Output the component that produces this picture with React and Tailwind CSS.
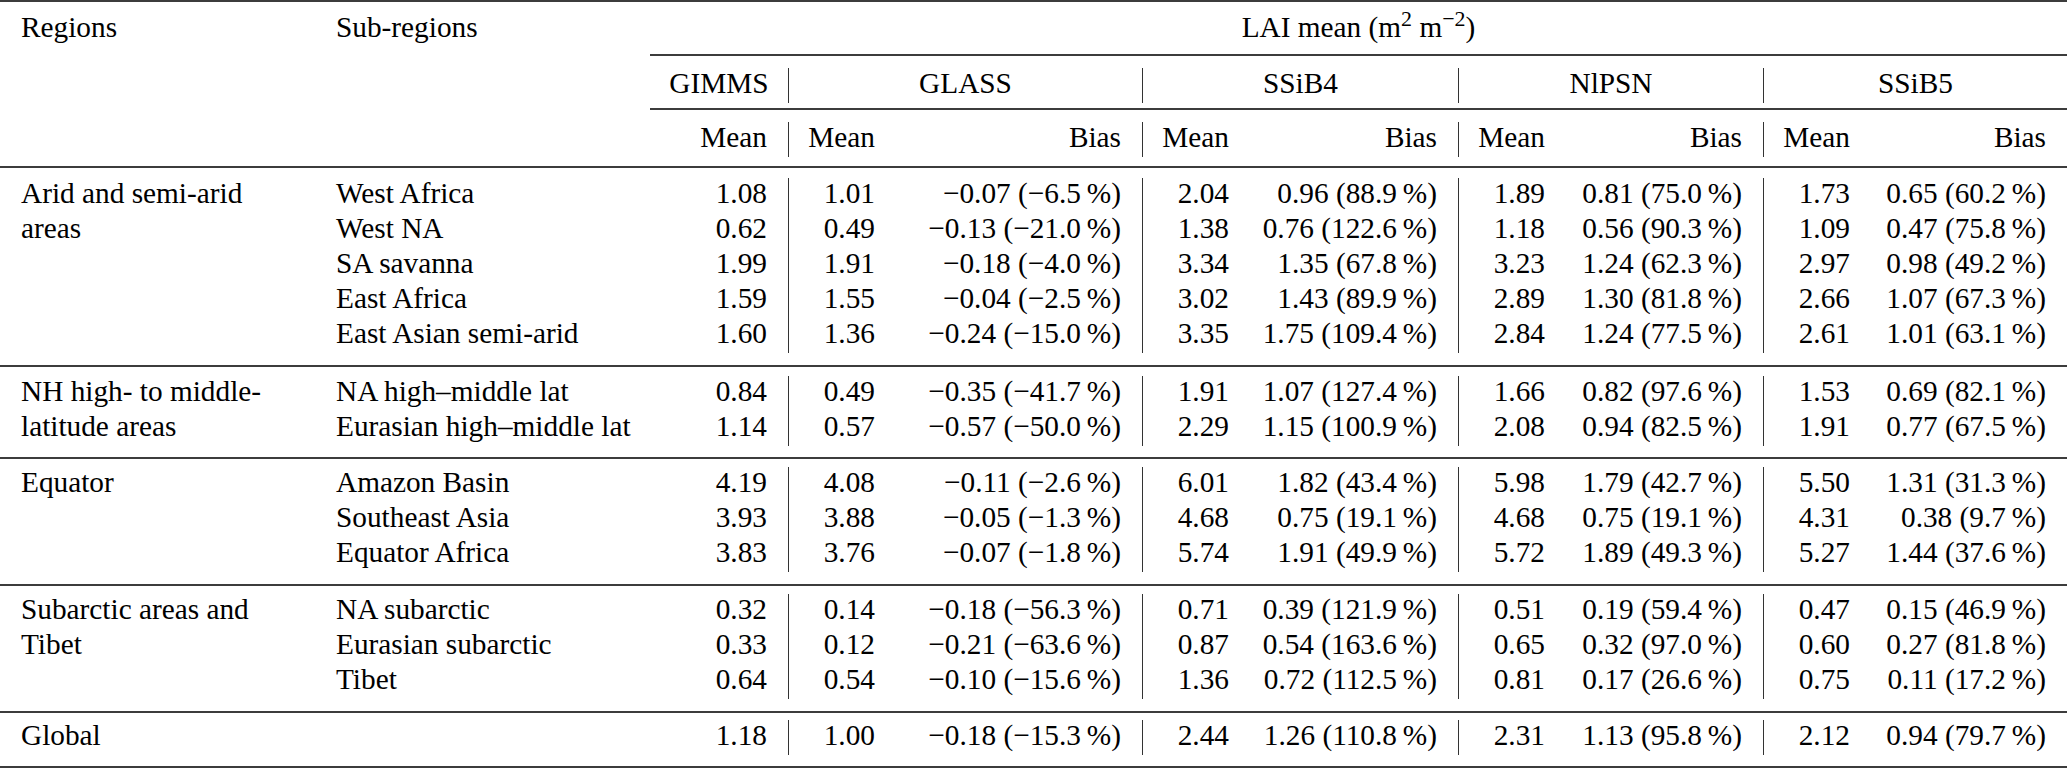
const M = '\u2212'
const T = '\u2009'

const groups = [
  {
    region: 'Arid and semi-arid areas',
    pad: 'pt-[10px] pb-[12px]',
    rows: [
      ['West Africa', '1.08', '1.01', `${M}0.07 (${M}6.5${T}%)`, '2.04', `0.96 (88.9${T}%)`, '1.89', `0.81 (75.0${T}%)`, '1.73', `0.65 (60.2${T}%)`],
      ['West NA', '0.62', '0.49', `${M}0.13 (${M}21.0${T}%)`, '1.38', `0.76 (122.6${T}%)`, '1.18', `0.56 (90.3${T}%)`, '1.09', `0.47 (75.8${T}%)`],
      ['SA savanna', '1.99', '1.91', `${M}0.18 (${M}4.0${T}%)`, '3.34', `1.35 (67.8${T}%)`, '3.23', `1.24 (62.3${T}%)`, '2.97', `0.98 (49.2${T}%)`],
      ['East Africa', '1.59', '1.55', `${M}0.04 (${M}2.5${T}%)`, '3.02', `1.43 (89.9${T}%)`, '2.89', `1.30 (81.8${T}%)`, '2.66', `1.07 (67.3${T}%)`],
      ['East Asian semi-arid', '1.60', '1.36', `${M}0.24 (${M}15.0${T}%)`, '3.35', `1.75 (109.4${T}%)`, '2.84', `1.24 (77.5${T}%)`, '2.61', `1.01 (63.1${T}%)`],
    ],
  },
  {
    region: 'NH high- to middle-latitude areas',
    pad: 'pt-[9px] pb-[11px]',
    rows: [
      ['NA high\u2013middle lat', '0.84', '0.49', `${M}0.35 (${M}41.7${T}%)`, '1.91', `1.07 (127.4${T}%)`, '1.66', `0.82 (97.6${T}%)`, '1.53', `0.69 (82.1${T}%)`],
      ['Eurasian high\u2013middle lat', '1.14', '0.57', `${M}0.57 (${M}50.0${T}%)`, '2.29', `1.15 (100.9${T}%)`, '2.08', `0.94 (82.5${T}%)`, '1.91', `0.77 (67.5${T}%)`],
    ],
  },
  {
    region: 'Equator',
    pad: 'pt-[8px] pb-[12px]',
    rows: [
      ['Amazon Basin', '4.19', '4.08', `${M}0.11 (${M}2.6${T}%)`, '6.01', `1.82 (43.4${T}%)`, '5.98', `1.79 (42.7${T}%)`, '5.50', `1.31 (31.3${T}%)`],
      ['Southeast Asia', '3.93', '3.88', `${M}0.05 (${M}1.3${T}%)`, '4.68', `0.75 (19.1${T}%)`, '4.68', `0.75 (19.1${T}%)`, '4.31', `0.38 (9.7${T}%)`],
      ['Equator Africa', '3.83', '3.76', `${M}0.07 (${M}1.8${T}%)`, '5.74', `1.91 (49.9${T}%)`, '5.72', `1.89 (49.3${T}%)`, '5.27', `1.44 (37.6${T}%)`],
    ],
  },
  {
    region: 'Subarctic areas and Tibet',
    pad: 'pt-[8px] pb-[12px]',
    rows: [
      ['NA subarctic', '0.32', '0.14', `${M}0.18 (${M}56.3${T}%)`, '0.71', `0.39 (121.9${T}%)`, '0.51', `0.19 (59.4${T}%)`, '0.47', `0.15 (46.9${T}%)`],
      ['Eurasian subarctic', '0.33', '0.12', `${M}0.21 (${M}63.6${T}%)`, '0.87', `0.54 (163.6${T}%)`, '0.65', `0.32 (97.0${T}%)`, '0.60', `0.27 (81.8${T}%)`],
      ['Tibet', '0.64', '0.54', `${M}0.10 (${M}15.6${T}%)`, '1.36', `0.72 (112.5${T}%)`, '0.81', `0.17 (26.6${T}%)`, '0.75', `0.11 (17.2${T}%)`],
    ],
  },
  {
    region: 'Global',
    pad: 'pt-[7px] pb-[11px]',
    rows: [
      ['', '1.18', '1.00', `${M}0.18 (${M}15.3${T}%)`, '2.44', `1.26 (110.8${T}%)`, '2.31', `1.13 (95.8${T}%)`, '2.12', `0.94 (79.7${T}%)`],
    ],
  },
]

const models = ['GLASS', 'SSiB4', 'NlPSN', 'SSiB5']

function Stack({ rows, i }) {
  return rows.map((r, k) => (
    <div key={k} className="h-[35px] leading-[31px] whitespace-nowrap">{r[i] || '\u00a0'}</div>
  ))
}

export default function App() {
  return (
    <div className="w-full min-h-screen bg-white text-black font-serif text-[29.3px]">
      <div className="border-t-2 border-[#3c3c3c] [font-family:'Liberation_Serif','Times_New_Roman',serif]">
        {/* Header */}
        <div className="flex border-b-2 border-[#3c3c3c]">
          <div className="w-[315px] shrink-0 pl-[21px] pt-[8px] leading-[35px]">Regions</div>
          <div className="w-[335px] shrink-0 pl-[21px] pt-[8px] leading-[35px]">Sub-regions</div>
          <div className="flex-1">
            <div className="pt-[8px] pb-[9px] border-b-2 border-[#3c3c3c] text-center leading-[35px]">
              LAI mean (m<sup>2</sup> m<sup>{M}2</sup>)
            </div>
            <div className="pt-[12px] pb-[5px] border-b-2 border-[#3c3c3c] grid grid-cols-[138px_354px_316px_305px_1fr]">
              <div className="h-[35px] leading-[31px] text-center">GIMMS</div>
              {models.map(m => (
                <div key={m} className="h-[35px] leading-[31px] text-center border-l border-[#333]">{m}</div>
              ))}
            </div>
            <div className="pt-[12px] pb-[9px] grid grid-cols-[138px_354px_316px_305px_1fr]">
              <div className="h-[35px] leading-[31px] text-right pr-[21px]">Mean</div>
              {models.map(m => (
                <div key={m} className="h-[35px] leading-[31px] flex border-l border-[#333]">
                  <span className="w-[86px] text-right">Mean</span>
                  <span className="flex-1 text-right pr-[21px]">Bias</span>
                </div>
              ))}
            </div>
          </div>
        </div>

        {/* Body */}
        {groups.map(g => (
          <div key={g.region} className={`grid grid-cols-[315px_335px_138px_354px_316px_305px_1fr] border-b-2 border-[#3c3c3c] ${g.pad}`}>
            <div className="pl-[21px] pr-[32px] leading-[35px] -mt-[2px]">{g.region}</div>
            <div className="pl-[21px]"><Stack rows={g.rows} i={0} /></div>
            <div className="pr-[21px] text-right"><Stack rows={g.rows} i={1} /></div>
            {[2, 4, 6, 8].map(i => (
              <div key={i} className="flex border-l border-[#333]">
                <div className="w-[86px] text-right"><Stack rows={g.rows} i={i} /></div>
                <div className="flex-1 text-right pr-[21px]"><Stack rows={g.rows} i={i + 1} /></div>
              </div>
            ))}
          </div>
        ))}
      </div>
    </div>
  )
}
